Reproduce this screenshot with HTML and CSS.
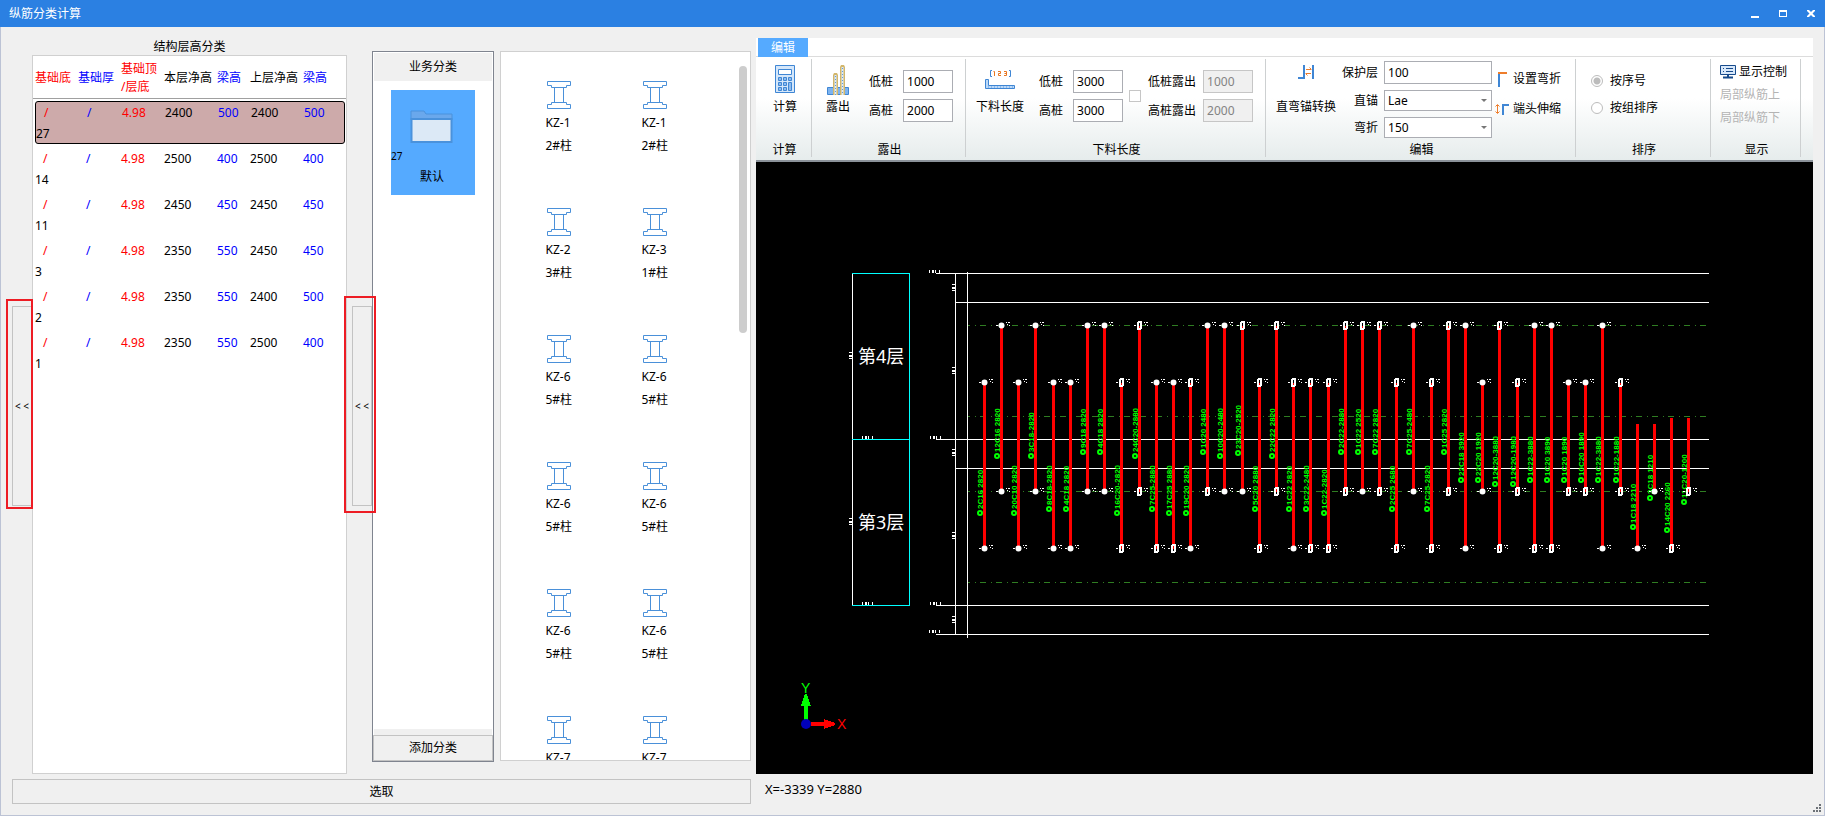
FILE: index.html
```html
<!DOCTYPE html>
<html lang="zh-CN">
<head>
  <meta charset="UTF-8" />
  <meta name="viewport" content="width=device-width, initial-scale=1.0" />
  <title>纵筋分类计算</title>
  <link rel="stylesheet" href="styles.css">
</head>
<body>
  <header class="titlebar">
    <h1>纵筋分类计算</h1>
    <div class="window-buttons">
      <button aria-label="最小化"><svg width="8" height="8"><path d="M0 6h8v2H0z" /></svg></button>
      <button aria-label="最大化"><svg width="8" height="8"><path d="M0 0h8v7H0zM1 2v4h6V2z" fill-rule="evenodd" /></svg></button>
      <button aria-label="关闭"><svg width="8" height="8"><path d="M0 0h2l2 2 2-2h2v1L5.500 3.500 8 6v1H6L4 5 2 7H0V6l2.500-2.500L0 1z" /></svg></button>
    </div>
  </header>

  <div class="window">
    <section class="left">
      <div class="panels">
        <button class="collapse collapse-left">&lt; &lt;</button>
        <div class="levels">
          <h2>结构层高分类</h2>
          <table>
            <thead>
              <tr>
                <th class="red">基础底</th>
                <th class="blue">基础厚</th>
                <th class="red">基础顶<br>/层底</th>
                <th>本层净高</th>
                <th class="blue">梁高</th>
                <th>上层净高</th>
                <th class="blue">梁高</th>
              </tr>
            </thead>
            <tbody id="level-rows"></tbody>
          </table>
        </div>
        <button class="collapse collapse-right">&lt; &lt;</button>

        <div class="category">
          <h2>业务分类</h2>
          <div class="category-list">
            <button class="tile">
              <svg width="44" height="34" viewBox="0 0 44 34">
                <path d="M1 1h13l2 3h26v6H1z" fill="#6aa8ec" stroke="#4a92dc" />
                <path d="M1.500 9h40v23h-40z" fill="#dce9f6" stroke="#4a92dc" stroke-width="2" />
              </svg>
              <span class="count">27</span>
              <span>默认</span>
            </button>
          </div>
          <button class="add">添加分类</button>
        </div>

        <div class="members">
          <div class="member-grid" id="members"></div>
          <div class="scroll-thumb"></div>
        </div>
      </div>
      <button class="pick">选取</button>
    </section>

    <section class="right">
      <nav class="tabs"><button>编辑</button></nav>
      <div class="ribbon">
        <div class="group group-calc">
          <div class="group-body">
            <button class="tool">
              <svg width="20" height="30" viewBox="0 0 20 30">
                <path d="M.5.5h19v27H.5z" fill="#d5e7fa" stroke="#3f86d4" />
                <path d="M3.500 4.500h13v5h-13z" fill="#fff" stroke="#3f86d4" />
                <path d="M3.500 12.500h3v3h-3zM8.500 12.500h3v3h-3zM13.500 12.500h3v3h-3zM3.500 17.500h3v3h-3zM8.500 17.500h3v3h-3zM3.500 22.500h3v3h-3zM8.500 22.500h3v3h-3zM13.500 17.500h3v8h-3z" fill="#8dbcf0" stroke="#3f86d4" />
              </svg>
              计算
            </button>
          </div>
          <h3>计算</h3>
        </div>

        <div class="group group-out">
          <div class="group-body">
            <button class="tool">
              <svg width="22" height="30" viewBox="0 0 22 30">
                <path d="M.5 22.500h21v7H.5z" fill="#7db3ef" stroke="#3f86d4" />
                <path d="M6 30V10l1-2h3l1 2v20zM13 30V2l1-2h3l1 2v28z" fill="#d2b66c" />
                <path d="M8.500 10v20M15.500 2v28" stroke="#dcebfb" stroke-width="2" />
                <path d="M8.500 11v19M15.500 3v27" stroke="#5c9ce2" stroke-dasharray="1 2" />
              </svg>
              露出
            </button>
            <div class="fields">
              <label>低桩<input type="text" value="1000"></label>
              <label>高桩<input type="text" value="2000"></label>
            </div>
          </div>
          <h3>露出</h3>
        </div>

        <div class="group group-length">
          <div class="group-body">
            <button class="tool">
              <svg width="32" height="30" viewBox="0 0 32 30">
                <path d="M8 5.500H6.500v6H8M25 5.500h1.500v6H25" fill="none" stroke="#3f86d4" />
                <path d="M9.500 6.500H10.500V11M14 6.500h2.500v2h-2v2H17M20 6.500h2.500v4H20M20.500 8.500h2" fill="none" stroke="#e87722" />
                <path d="M1.500 14.500h3v6h26v3h-29z" fill="#bcd9f8" stroke="#3f86d4" />
                <path d="M4 22h26" stroke="#5c9ce2" stroke-dasharray="1 2" />
              </svg>
              下料长度
            </button>
            <div class="fields">
              <label>低桩<input type="text" value="3000"></label>
              <label>高桩<input type="text" value="3000"></label>
            </div>
            <input type="checkbox" class="out-check" aria-label="露出">
            <div class="fields fields-out">
              <label>低桩露出<input type="text" value="1000" disabled></label>
              <label>高桩露出<input type="text" value="2000" disabled></label>
            </div>
          </div>
          <h3>下料长度</h3>
        </div>

        <div class="group group-edit">
          <div class="group-body">
            <button class="tool">
              <svg width="16" height="30" viewBox="0 2 16 30">
                <path d="M0 15h6V0M15 0v16" fill="none" stroke="#3f86d4" stroke-width="2" />
                <path d="M8 6.500h5M11.500 4.500l2 2M13 10.500H8M9.500 12.500l-2-2" stroke="#ee7d2b" />
              </svg>
              直弯锚转换
            </button>
            <div class="fields fields-edit">
              <label>保护层<input type="text" value="100"></label>
              <label>直锚<span class="select"><select><option>Lae</option></select></span></label>
              <label>弯折<span class="select"><select><option>150</option></select></span></label>
            </div>
            <div class="commands">
              <button>
                <svg width="14" height="16"><path d="M4 16V3" stroke="#3f86d4" stroke-width="2" /><path d="M3 2h9" stroke="#ee7d2b" stroke-width="2" /></svg>
                设置弯折
              </button>
              <button>
                <svg width="14" height="14">
                  <path d="M8 13V3h6" fill="none" stroke="#3f86d4" stroke-width="2" />
                  <path d="M2.500 3v8M.5 4.500l2-2 2 2M.5 9.500l2 2 2-2" fill="none" stroke="#ee7d2b" />
                </svg>
                端头伸缩
              </button>
            </div>
          </div>
          <h3>编辑</h3>
        </div>

        <div class="group group-sort">
          <div class="group-body">
            <label><input type="radio" name="sort" checked>按序号</label>
            <label><input type="radio" name="sort">按组排序</label>
          </div>
          <h3>排序</h3>
        </div>

        <div class="group group-show">
          <div class="group-body">
            <button>
              <svg width="16" height="14" viewBox="0 0 16 14">
                <path d="M.5.5h15v9H.5z" fill="#d8e8fa" stroke="#174a8c" />
                <path d="M3 3.500h1M6 3.500h7M3 6.500h1M6 6.500h7" stroke="#174a8c" />
                <path d="M8 10v3M3 12.500h10" stroke="#174a8c" stroke-width="2" />
              </svg>
              显示控制
            </button>
            <button disabled>局部纵筋上</button>
            <button disabled>局部纵筋下</button>
          </div>
          <h3>显示</h3>
        </div>
      </div>

      <div class="canvas">
        <svg id="drawing" viewBox="756 162 1057 612" preserveAspectRatio="xMinYMin meet"></svg>
      </div>
      <footer class="status">
        <span>X=-3339 Y=2880</span>
        <svg class="grip" width="8" height="8"><path d="M6 0h2v2H6zM3 3h2v2H3zM6 3h2v2H6zM0 6h2v2H0zM3 6h2v2H3zM6 6h2v2H6z" /></svg>
      </footer>
    </section>
  </div>

  <script src="app.js"></script>
</body>
</html>
```

FILE: styles.css
```css
* {
  box-sizing: border-box;
}
body {
  margin: 0;
  height: 100vh;
  display: flex;
  flex-direction: column;
  overflow: hidden;
  background: #f0f0f0;
  color: #000;
  font: 12px/18px 'Noto Sans', 'Noto Sans CJK SC', sans-serif;
}
h1, h2, h3 {
  margin: 0;
  font-size: 12px;
  font-weight: normal;
  text-align: center;
}
button, input, select {
  font: inherit;
  color: inherit;
  margin: 0;
}
button {
  padding: 0;
  border: none;
  background: none;
  white-space: nowrap;
}
svg {
  display: block;
  flex: none;
}
.red { color: #f00; }
.blue { color: #00f; }

/* title bar */
.titlebar {
  height: 27px;
  flex: none;
  display: flex;
  align-items: center;
  justify-content: space-between;
  padding-left: 9px;
  background: #2b80e2;
  color: #fff;
}
.window-buttons {
  display: flex;
}
.window-buttons button {
  width: 28px;
  height: 27px;
  display: flex;
  align-items: center;
  justify-content: center;
}
.window-buttons svg {
  fill: #fff;
}
.window {
  flex: 1;
  min-height: 0;
  display: flex;
  border: 1px solid #bcc3d5;
  border-top: none;
}

/* left side */
.left {
  width: 750px;
  flex: none;
  display: flex;
  flex-direction: column;
  padding: 0 0 11px 11px;
}
.panels {
  flex: 1;
  min-height: 0;
  display: flex;
  margin-bottom: 5px;
}
.collapse {
  position: relative;
  align-self: center;
  flex: none;
  width: 20px;
  height: 200px;
  margin-top: 10px;
  border: 1px solid #c3c3c3;
  font-size: 10px;
}
.collapse-right {
  margin-left: 5px;
}
.collapse::after {
  content: "";
  position: absolute;
  z-index: 2;
  border: 2px solid #ed1c24;
}
.collapse-left::after {
  inset: -8px -2px -4px -7px;
}
.collapse-right::after {
  inset: -11px -5px -8px -9px;
}
.levels {
  width: 315px;
  flex: none;
  display: flex;
  flex-direction: column;
  padding-top: 11px;
}
.levels h2 {
  height: 17px;
}
.levels table {
  flex: 1;
  display: block;
  border: 1px solid #d0d0d0;
  background: #fff;
}
.levels thead, .levels tbody {
  display: block;
}
.levels tr {
  display: grid;
  grid-template-columns: 43px 43px 43px 53px 33px 53px 1fr;
}
.levels th, .levels td {
  padding: 0;
  font-weight: normal;
  text-align: left;
}
.levels thead tr {
  height: 43px;
  align-items: center;
  padding: 2px 0 0 2px;
  border-bottom: 1px solid #a0a0a0;
}
.levels tbody tr {
  height: 43px;
  margin: 2px 1px 3px 2px;
  line-height: 22px;
  border: 1px solid transparent;
  border-width: 1px 1px 1px 0;
  border-radius: 3px;
}
.levels tbody tr.selected {
  background: #cdaaaa;
  border-color: #000;
  border-left-width: 1px;
}
.levels tbody td:nth-child(-n+2) {
  padding-left: 8px;
}
.levels tbody td.count {
  grid-column: 1 / -1;
  padding-left: 0;
  line-height: 20px;
}
.category {
  width: 122px;
  flex: none;
  display: flex;
  flex-direction: column;
  margin: 24px 0 12px;
  border: 1px solid #7f848f;
  background: #fff;
}
.category h2 {
  margin: 1px;
  line-height: 28px;
  background: #f0f0f0;
}
.category-list {
  flex: 1;
  margin: 0 1px;
  padding: 8px 0;
  border-bottom: 6px solid #f0f0f0;
}
.tile {
  width: 84px;
  height: 105px;
  margin: 0 auto;
  display: flex;
  flex-direction: column;
  align-items: center;
  padding: 20px 2px 0 0;
  background: #55aaff;
}
.tile .count {
  align-self: flex-start;
  margin: 3px 0;
  font-size: 10px;
}
.add {
  height: 26px;
  border: 1px solid #c3c3c3;
  background: #f0f0f0;
}
.members {
  position: relative;
  width: 251px;
  flex: none;
  margin: 24px 0 13px 6px;
  border: 1px solid #d0d0d0;
  background: #fff;
  overflow: hidden;
}
.member-grid {
  display: grid;
  grid-template-columns: 96px 96px;
  grid-auto-rows: 127px;
  padding: 29px 0 0 10px;
}
.member {
  display: flex;
  flex-direction: column;
  align-items: center;
}
.member span {
  width: 27px;
  white-space: nowrap;
  line-height: 23px;
}
.member svg {
  margin-bottom: 2px;
}
.scroll-thumb {
  position: absolute;
  top: 14px;
  right: 3px;
  width: 8px;
  height: 267px;
  border-radius: 4px;
  background: #cdcdcd;
}
.pick {
  height: 25px;
  flex: none;
  border: 1px solid #c3c3c3;
}

/* ribbon */
.right {
  flex: 1;
  min-width: 0;
  display: flex;
  flex-direction: column;
  padding: 11px 11px 0 5px;
}
.tabs {
  display: flex;
  flex: none;
  height: 19px;
  padding-left: 2px;
  background: #fff;
  border-bottom: 1px solid #dcdcdc;
}
.tabs button {
  width: 50px;
  height: 19px;
  background: #55aaff;
  color: #fff;
}
.ribbon {
  display: flex;
  flex: none;
  height: 105px;
  padding: 2px 0 3px;
  border-bottom: 2px solid #8b9299;
  background: linear-gradient(#fff 40%, #e6ecec);
}
.group {
  flex: none;
  display: flex;
  flex-direction: column;
  border-right: 1px solid #cdd0d1;
}
.group h3 {
  margin-bottom: -2px;
  padding-left: 2px;
}
.group-body {
  flex: 1;
  display: flex;
}
.group-calc { width: 56px; }
.group-out { width: 154px; }
.group-length { width: 300px; }
.group-edit { width: 310px; }
.group-sort { width: 135px; }
.group-show { width: 90px; }
.tool {
  display: flex;
  flex-direction: column;
  align-items: center;
  gap: 3px;
  align-self: flex-start;
  padding-top: 6px;
}
.group-calc .tool { margin: 0 0 0 17px; }
.group-out .tool { margin: 0 19px 0 14px; }
.group-length .tool { margin: 0 15px 0 10px; }
.group-edit .tool { margin: 0 6px 0 10px; }
.fields {
  display: flex;
  flex-direction: column;
  gap: 6px;
  padding-top: 11px;
}
.fields label {
  display: flex;
  align-items: center;
  gap: 10px;
  height: 23px;
}
.fields input {
  width: 50px;
  height: 23px;
  padding: 0 3px;
  border: 1px solid #abadb3;
  background: #fff;
}
.fields input:disabled {
  border-color: #c6c6c6;
  background: #f0f0f0;
  color: #838383;
}
.out-check {
  appearance: none;
  width: 12px;
  height: 12px;
  margin: 31px 7px 0 6px;
  border: 1px solid #c6c6c6;
  background: #fff;
}
.fields-out label {
  gap: 7px;
}
.fields-edit {
  padding-top: 2px;
}
.fields-edit label {
  gap: 6px;
  width: 150px;
  justify-content: flex-end;
}
.fields-edit label + label {
  height: 21px;
}
.fields-edit input {
  width: 108px;
}
.select {
  position: relative;
}
.select select {
  display: block;
  appearance: none;
  width: 108px;
  height: 21px;
  padding: 0 3px;
  border: 1px solid #abadb3;
  border-radius: 0;
  background: #fff;
}
.select::after {
  content: "";
  position: absolute;
  top: 9px;
  right: 5px;
  border: 3px solid transparent;
  border-top-color: #777;
  border-bottom: none;
}
.commands {
  display: flex;
  flex-direction: column;
  gap: 12px;
  padding: 11px 0 0 3px;
}
.commands button {
  display: flex;
  align-items: center;
  gap: 4px;
  height: 18px;
}
.group-sort .group-body {
  flex-direction: column;
  gap: 9px;
  padding: 13px 0 0 15px;
}
.group-sort label {
  display: flex;
  align-items: center;
  gap: 7px;
}
.group-sort input {
  appearance: none;
  width: 12px;
  height: 12px;
  border: 1px solid #bcbcbc;
  border-radius: 50%;
  background: #fff;
}
.group-sort input:checked {
  background: radial-gradient(#bcbcbc 3px, #fff 4px);
}
.group-show .group-body {
  flex-direction: column;
  align-items: flex-start;
  gap: 5px;
  padding: 4px 0 0 9px;
}
.group-show button {
  display: flex;
  align-items: center;
  gap: 3px;
}
.group-show button:disabled {
  color: #b4b4b4;
}

/* drawing */
.canvas {
  flex: 1;
  min-height: 0;
  background: #000;
}
.canvas svg {
  width: 100%;
  height: 100%;
  shape-rendering: crispEdges;
}
.canvas line, .canvas path, .canvas rect {
  fill: none;
  stroke: #fff;
}
.canvas circle {
  shape-rendering: auto;
}
.canvas .cyan { stroke: #0ff; }
.canvas .axis {
  stroke: #2f7d22;
  stroke-dasharray: 6 5 1 4;
  stroke-dashoffset: 4;
}
.canvas .bar {
  stroke: #f00;
  stroke-width: 3;
}
.canvas .dot {
  fill: #fff;
}
.canvas .ring {
  stroke-width: 2;
}
.canvas .specks {
  stroke-width: 3;
  stroke-dasharray: 1 2 2 1 1 3;
}
.canvas .bar-label {
  fill: #0f0;
  font: bold 8px 'Liberation Sans', sans-serif;
}
.canvas .bar-tag {
  stroke: #0f0;
  stroke-width: 2;
}
.canvas .storey {
  fill: #fff;
  font-size: 18px;
}
.canvas .axis-name {
  font: 14px 'Liberation Sans', sans-serif;
}
.status {
  height: 41px;
  flex: none;
  display: flex;
  justify-content: space-between;
  padding: 6px 0 0 9px;
  font-size: 13px;
}
.grip {
  align-self: flex-end;
  margin: 0 -8px 3px 0;
  fill: #6d7278;
}
```

FILE: app.js
```js
const levels = [
  ['/', '/', '4.98', 2400, 500, 2400, 500, 27],
  ['/', '/', '4.98', 2500, 400, 2500, 400, 14],
  ['/', '/', '4.98', 2450, 450, 2450, 450, 11],
  ['/', '/', '4.98', 2350, 550, 2450, 450, 3],
  ['/', '/', '4.98', 2350, 550, 2400, 500, 2],
  ['/', '/', '4.98', 2350, 550, 2500, 400, 1]
];
const colors = ['red', 'blue', 'red', '', 'blue', '', 'blue', 'count'];

document.getElementById('level-rows').innerHTML = levels.map((row, i) =>
  `<tr class="${i === 0 ? 'selected' : ''}">` +
  row.map((v, c) => `<td class="${colors[c]}">${v}</td>`).join('') + '</tr>'
).join('');

const members = [
  ['KZ-1', '2#柱'], ['KZ-1', '2#柱'],
  ['KZ-2', '3#柱'], ['KZ-3', '1#柱'],
  ['KZ-6', '5#柱'], ['KZ-6', '5#柱'],
  ['KZ-6', '5#柱'], ['KZ-6', '5#柱'],
  ['KZ-6', '5#柱'], ['KZ-6', '5#柱'],
  ['KZ-7', ''], ['KZ-7', '']
];
const columnIcon = `<svg width="24" height="28"><path fill="none" stroke="#4a90d9"
  d="M.5.5h23v4h-4v2h-15v-2h-4zM7.500 6.500v15M16.500 6.500v15M.5 27.500v-4h4v-2h15v2h4v4z"/></svg>`;

document.getElementById('members').innerHTML = members.map(([name, pos]) =>
  `<div class="member">${columnIcon}<span>${name}</span><span>${pos}</span></div>`
).join('');

// x, top, bottom, top mark, bottom mark, label, label start
// marks: d = dot, o = ring, - = none
const bars = [
  [984, 382, 548, 'd', 'd', '2C16 2820', 516],
  [1001, 325, 491, 'd', 'd', '12C16 2820', 459],
  [1018, 382, 548, 'd', 'd', '20C10 2820', 516],
  [1035, 325, 491, 'd', 'd', '3C18-2820', 459],
  [1053, 382, 548, 'd', 'd', '8C18-2820', 512],
  [1070, 382, 548, 'd', 'd', '4C18 2820', 512],
  [1087, 325, 491, 'd', 'd', '9C18 2820', 455],
  [1104, 325, 491, 'd', 'd', '4C18 2820', 455],
  [1121, 382, 548, 'o', 'o', '16C20-2820', 516],
  [1139, 325, 491, 'o', 'o', '24C20-2880', 459],
  [1156, 382, 548, 'd', 'o', '7C25-2880', 512],
  [1173, 382, 548, 'd', 'o', '17C25 2880', 516],
  [1190, 382, 548, 'o', 'd', '19C20 2820', 516],
  [1207, 325, 491, 'd', 'o', '1C20 2480', 455],
  [1224, 325, 491, 'd', 'd', '10C20-2480', 459],
  [1242, 325, 491, 'o', 'd', '23C20-2520', 456],
  [1259, 382, 548, 'o', 'o', '5C20 2880', 512],
  [1276, 325, 491, 'o', 'o', '22C22 2820', 459],
  [1293, 382, 548, 'o', 'd', '1C22 2820', 512],
  [1310, 382, 548, 'o', 'o', '3C22-2480', 512],
  [1328, 382, 548, 'o', 'o', '1C22-2820', 516],
  [1345, 325, 491, 'o', 'o', '2C22-2880', 455],
  [1362, 325, 491, 'o', 'd', '1C22 2520', 455],
  [1379, 325, 491, 'o', 'o', '7C22 2820', 455],
  [1396, 382, 548, 'o', 'o', '2C25 2680', 512],
  [1413, 325, 491, 'd', 'd', '7C25-2480', 455],
  [1431, 382, 548, 'o', 'o', '7C25-2820', 512],
  [1448, 325, 491, 'o', 'o', '1C25 2820', 455],
  [1465, 325, 548, 'd', 'd', '22C18 3920', 483],
  [1482, 382, 491, 'd', 'd', '22C20 1920', 483],
  [1499, 325, 548, 'o', 'o', '12C20-3880', 487],
  [1517, 382, 491, 'o', 'o', '12C20-1980', 487],
  [1534, 325, 548, 'd', 'o', '1C22-3880', 483],
  [1551, 325, 548, 'd', 'o', '1C20 3890', 483],
  [1568, 382, 491, 'd', 'o', '1C20 1890', 483],
  [1585, 382, 491, 'd', 'o', '10C20 1890', 483],
  [1602, 325, 548, 'd', 'd', '1C22-3880', 483],
  [1620, 382, 491, 'o', 'o', '1C22-1880', 483],
  [1637, 423, 548, '-', 'd', '1C18 2210', 530],
  [1654, 423, 491, '-', 'd', '3C18 1210', 501],
  [1671, 417, 548, '-', 'o', '14C20 2260', 533],
  [1688, 417, 491, '-', 'o', '11C20-1200', 505]
];

function line(x1, y1, x2, y2, cls = '') {
  return `<path class="${cls}" d="M${x1 + 0.5} ${y1 + 0.5}L${x2 + 0.5} ${y2 + 0.5}"/>`;
}

function specks(x, y, length, vertical) {
  return `<path class="specks" d="M${x} ${y}${vertical ? 'v' : 'h'}${length}"/>`;
}

function mark(type, x, y) {
  if (type === '-') return '';
  const shape = type === 'd'
    ? `<circle class="dot" cx="${x + 0.5}" cy="${y + 0.5}" r="3"/>`
    : `<rect class="ring" x="${x - 1}" y="${y - 3}" width="3" height="7" rx="1"/>`;
  return shape + line(x - 6, y, x - 4, y) +
    `<path d="M${x + 5} ${y - 2.5}h1m1 0h2M${x + 6} ${y - 0.5}h1m1 1h1"/>`;
}

let out = '';

// section lines
[273, 439, 605, 634].forEach(y => { out += line(935, y, 1708, y); });
[302, 468].forEach(y => { out += line(955, y, 1708, y); });
[325, 416, 491, 582].forEach(y => { out += line(967, y, 1705, y, 'axis'); });
out += line(967, 271, 967, 637) + line(955, 273, 955, 634);
[[929, 271], [930, 437], [930, 603], [929, 631], [862, 437], [862, 603]].forEach(([x, y]) => {
  out += specks(x, y, 12);
});
[[953, 284], [953, 367], [953, 449], [953, 532], [953, 616], [850, 352], [850, 518]].forEach(([x, y]) => {
  out += specks(x, y, 7, true);
});

// storey boxes
out += line(852, 273, 852, 605);
out += '<path class="cyan" d="M852 273.500h57.500v332H852M852 439.500h57"/>';
out += '<text class="storey" x="858" y="363">第4层</text>';
out += '<text class="storey" x="858" y="529">第3层</text>';

bars.forEach(([x, top, bottom, m1, m2, label, start]) => {
  out += `<text class="bar-label" transform="translate(${x - 1} ${start - 7}) rotate(-90)">${label}</text>`;
  out += `<circle class="bar-tag" fill="none" cx="${x - 4}" cy="${start - 3}" r="2"/>`;
  out += line(x, top, x, bottom, 'bar') + mark(m1, x, top) + mark(m2, x, bottom);
});

// ucs icon
out += `<path d="M804 704h4v16h-4zM801 706l4-12h2l4 12z" style="fill:#0f0;stroke:none"/>
  <path d="M811 722h13v4h-13zM824 719l11 4v2l-11 4z" style="fill:#f00;stroke:none"/>
  <circle cx="806" cy="724" r="5" fill="#00b"/>
  <text class="axis-name" x="801" y="693" fill="#0f0">Y</text>
  <text class="axis-name" x="837" y="729" fill="#f00">X</text>`;

document.getElementById('drawing').innerHTML = out;
```
